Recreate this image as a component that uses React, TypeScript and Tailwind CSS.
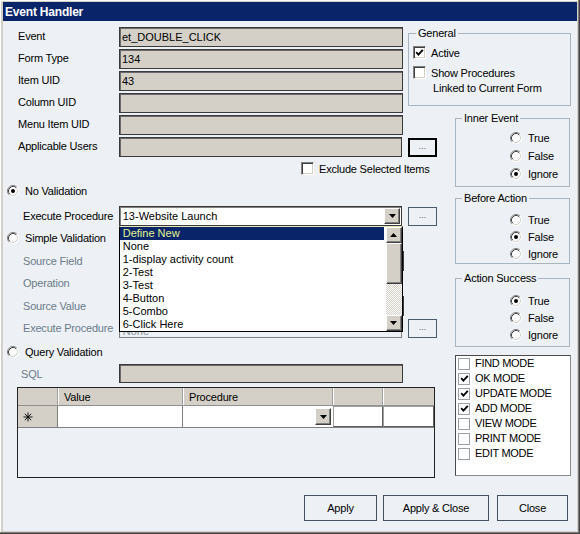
import React from 'react';

const raised =
  'bg-[#d4d0c8] border border-t-white border-l-white border-r-[#404040] border-b-[#404040] shadow-[inset_-1px_-1px_#808080]';
const field = 'h-5 border border-[#3a3a3a] shadow-[inset_1px_1px_#6a6a6a] bg-[#d4d0c8] flex items-center pl-[2px]';
const label = 'text-[11px] leading-[14px] tracking-[-0.2px]';
const dim = 'text-[#6b7a8c]';

function Arrow({ up }: { up?: boolean }) {
  return (
    <svg width="7" height="4" viewBox="0 0 7 4">
      <path d={up ? 'M3.5 0L7 4H0z' : 'M0 0h7L3.5 4z'} fill="#000" />
    </svg>
  );
}

function DropBtn({ up }: { up?: boolean }) {
  return (
    <div className={`${raised} w-4 h-4 shrink-0 flex items-center justify-center`}>
      <Arrow up={up} />
    </div>
  );
}

function Radio({ on }: { on?: boolean }) {
  return (
    <svg width="12" height="12" viewBox="0 0 12 12" className="shrink-0">
      <circle cx="6" cy="6" r="5" fill="#fff" />
      <path d="M2.1 9.9A5.5 5.5 0 0 1 9.9 2.1" fill="none" stroke="#808080" />
      <path d="M2.82 9.18A4.5 4.5 0 0 1 9.18 2.82" fill="none" stroke="#404040" />
      <path d="M9.9 2.1A5.5 5.5 0 0 1 2.1 9.9" fill="none" stroke="#ffffff" />
      <path d="M9.18 2.82A4.5 4.5 0 0 1 2.82 9.18" fill="none" stroke="#d4d0c8" />
      {on && <circle cx="6" cy="6" r="2" fill="#000" />}
    </svg>
  );
}

function Tick() {
  return (
    <svg width="9" height="9" viewBox="0 0 9 9">
      <path d="M1.2 4.2L3.4 6.6L7.8 1.8" stroke="#000" strokeWidth="1.8" fill="none" />
    </svg>
  );
}

function Check({ on }: { on?: boolean }) {
  return (
    <span className="w-[13px] h-[13px] shrink-0 bg-white border border-t-[#808080] border-l-[#808080] border-r-white border-b-white shadow-[inset_1px_1px_#404040,inset_-1px_-1px_#d4d0c8] flex items-center justify-center">
      {on && <Tick />}
    </span>
  );
}

function Dots({ strong }: { strong?: boolean }) {
  return (
    <div
      className={`ml-[6px] w-[29px] h-[19px] shrink-0 flex items-center justify-center text-[9px] text-[#4a5a70] ${
        strong ? 'border-2 border-black' : 'border border-[#4b5b6b]'
      }`}
    >
      ...
    </div>
  );
}

function Row({ name, value }: { name: string; value?: string }) {
  return (
    <div className="flex items-center h-5 pl-[15px]">
      <span className={`${label} w-[101px] -mt-[2px]`}>{name}</span>
      <div className={`${field} w-[284px] text-[11px]`}>{value}</div>
    </div>
  );
}

function RadioLine({ text, on, className = '' }: { text: string; on?: boolean; className?: string }) {
  return (
    <div className={`flex items-center gap-[6px] ${className}`}>
      <Radio on={on} />
      <span className={label}>{text}</span>
    </div>
  );
}

function Group({
  title,
  sel,
  className,
  pad,
  row,
}: {
  title: string;
  sel: number;
  className: string;
  pad: string;
  row: string;
}) {
  return (
    <fieldset className={`ml-[18px] w-[115px] border border-[#a8b4c0] ${className}`}>
      <legend className={`${label} ml-[6px] px-[2px]`}>{title}</legend>
      <div className={pad}>
        {['True', 'False', 'Ignore'].map((t, i) => (
          <RadioLine key={t} text={t} on={i === sel} className={`${row} pl-[54px]`} />
        ))}
      </div>
    </fieldset>
  );
}

const procedures = ['None', '1-display activity count', '2-Test', '3-Test', '4-Button', '5-Combo', '6-Click Here'];
const modes: [string, boolean][] = [
  ['FIND MODE', false],
  ['OK MODE', true],
  ['UPDATE MODE', true],
  ['ADD MODE', true],
  ['VIEW MODE', false],
  ['PRINT MODE', false],
  ['EDIT MODE', false],
];

export default function App() {
  return (
    <div className="w-[580px] h-[534px] bg-[#d4d0c8] pt-[2px] px-[3px] pb-[3px] flex flex-col font-['Liberation_Sans',Arial,sans-serif] text-black shadow-[inset_-1px_-1px_#404040,inset_-2px_-2px_#808080,inset_1px_1px_#ffffff]">
      <div className="h-[19px] bg-[#0a246a] text-white font-bold text-[12px] tracking-[-0.2px] flex items-center pl-[2px]">
        Event Handler
      </div>

      <div className="flex-1 bg-[#edf1f5] flex flex-col">
        <div className="flex items-start">
          {/* left side: fields, validation options, grid */}
          <div className="w-[434px] shrink-0 flex flex-col">
            <div className="mt-[6px] flex flex-col gap-[2px]">
              <Row name="Event" value="et_DOUBLE_CLICK" />
              <Row name="Form Type" value="134" />
              <Row name="Item UID" value="43" />
              <Row name="Column UID" />
              <Row name="Menu Item UID" />
              <div className="flex items-center h-5 pl-[15px]">
                <span className={`${label} w-[101px] -mt-[2px]`}>Applicable Users</span>
                <div className={`${field} w-[284px]`} />
                <Dots strong />
              </div>
            </div>

            <div className="mt-[5px] h-[13px] flex items-center gap-[5px] pl-[298px]">
              <Check />
              <span className={label}>Exclude Selected Items</span>
            </div>

            <RadioLine text="No Validation" on className="mt-[9px] h-[14px] pl-[4px]" />

            <div className="mt-[8px] flex items-center h-5 pl-[20px]">
              <span className={`${label} w-[96px]`}>Execute Procedure</span>
              <div className="relative w-[284px] h-5">
                <div className="h-5 bg-white border border-[#3a3a3a] shadow-[inset_1px_1px_#808080] flex items-center justify-between pl-[3px] pr-[1px] text-[11px]">
                  <span>13-Website Launch</span>
                  <DropBtn />
                </div>
                {/* open drop-down list */}
                <div className="absolute z-10 left-0 top-full w-[284px] h-[106px] bg-white border border-black border-t-[#e6e8b8] flex text-[11px] leading-[13px]">
                  <div className="flex-1 flex flex-col pr-[2px]">
                    <div className="h-[13px] bg-[#0a246a] text-[#e0f590] pl-[3px]">Define New</div>
                    {procedures.map((p) => (
                      <div key={p} className="h-[13px] pl-[3px]">
                        {p}
                      </div>
                    ))}
                  </div>
                  <div className="w-4 flex flex-col">
                    <DropBtn up />
                    <div className={`${raised} h-[41px]`} />
                    <div className="flex-1 bg-[image:repeating-conic-gradient(#d4d0c8_0_25%,#ffffff_0_50%)] bg-[length:2px_2px]" />
                    <DropBtn />
                  </div>
                </div>
              </div>
              <Dots />
            </div>

            <RadioLine text="Simple Validation" className="mt-[5px] h-[14px] pl-[4px]" />

            <div className="mt-[6px] flex items-center h-5 pl-[20px]">
              <span className={`${label} ${dim} w-[96px]`}>Source Field</span>
              <div className={`${field} w-[285px]`} />
            </div>
            <div className="mt-[2px] flex items-center h-5 pl-[20px]">
              <span className={`${label} ${dim} w-[96px]`}>Operation</span>
              <div className={`${field} w-[283px]`} />
            </div>
            <div className="mt-[3px] flex items-center h-5 pl-[20px]">
              <span className={`${label} ${dim} w-[96px]`}>Source Value</span>
              <div className={`${field} w-[285px]`} />
            </div>
            <div className="mt-[2px] flex items-center h-5 pl-[20px]">
              <span className={`${label} ${dim} w-[96px]`}>Execute Procedure</span>
              <div className="w-[284px] h-5 border border-[#808080] flex items-end pl-[3px] text-[11px] leading-[12px] text-[#8a94a0]">
                None
              </div>
              <Dots />
            </div>

            <RadioLine text="Query Validation" className="mt-[7px] h-[14px] pl-[4px]" />

            <div className="mt-[5px] flex items-center h-[19px] pl-[18px]">
              <span className={`${label} ${dim} w-[98px]`}>SQL</span>
              <div className={`${field} h-[19px] w-[284px]`} />
            </div>

            {/* value / procedure grid */}
            <div className="mt-[4px] ml-[14px] w-[418px] h-[91px] border border-[#222] flex flex-col text-[11px] tracking-[-0.2px]">
              <div className="h-[18px] flex bg-[#d4d0c8] border-b border-[#909090]">
                <div className="w-[40px] border-r border-[#a0a0a0]" />
                <div className="w-[125px] border-r border-[#a0a0a0] shadow-[inset_1px_0_#ffffff] pl-[6px] pt-[2px] flex items-center">Value</div>
                <div className="w-[150px] border-r border-[#a0a0a0] shadow-[inset_1px_0_#ffffff] pl-[6px] pt-[2px] flex items-center">Procedure</div>
                <div className="w-[50px] border-r border-[#a0a0a0] shadow-[inset_1px_0_#ffffff]" />
                <div className="flex-1 shadow-[inset_1px_0_#ffffff]" />
              </div>
              <div className="h-[22px] flex border-b border-[#808080]">
                <div className="w-[40px] bg-[#d4d0c8] border-r border-[#808080] flex items-center pl-[5px]">
                  <svg width="10" height="10" viewBox="0 0 10 10">
                    <path d="M5 0.5V9.5M0.5 5H9.5M1.8 1.8L8.2 8.2M8.2 1.8L1.8 8.2" stroke="#000" strokeWidth="0.9" />
                  </svg>
                </div>
                <div className="w-[125px] bg-white border-r border-[#808080]" />
                <div className="w-[150px] bg-white flex items-center justify-end pr-[2px]">
                  <div className={`${raised} w-4 h-[17px] flex items-center justify-center`}>
                    <Arrow />
                  </div>
                </div>
                <div className="w-[50px] bg-white border border-[#a0a0a0] border-r-[#606060] border-b-[#606060]" />
                <div className="flex-1 bg-white border border-[#a0a0a0] border-r-[#606060] border-b-[#606060]" />
              </div>
            </div>
          </div>

          {/* right side: option groups and mode list */}
          <div className="flex flex-col">
            <fieldset className="mt-[5px] -ml-[29px] w-[163px] h-[80px] border border-[#a8b4c0]">
              <legend className={`${label} ml-[7px] px-[2px]`}>General</legend>
              <div className="pt-[6px] pl-[4px] flex flex-col">
                <div className="h-[13px] flex items-center gap-[5px]">
                  <Check on />
                  <span className={label}>Active</span>
                </div>
                <div className="mt-[7px] h-[13px] flex items-center gap-[5px]">
                  <Check />
                  <span className={label}>Show Procedures</span>
                </div>
                <div className={`${label} mt-[2px] pl-[20px]`}>Linked to Current Form</div>
              </div>
            </fieldset>

            <Group title="Inner Event" sel={2} className="mt-[5px] h-[76px]" pad="pt-[4px]" row="h-[18px]" />
            <Group title="Before Action" sel={1} className="mt-[4px] h-[73px]" pad="pt-[6px]" row="h-[17px]" />
            <Group title="Action Success" sel={0} className="mt-[7px] h-[76px]" pad="pt-[7px]" row="h-[17px]" />

            <div className="mt-[8px] ml-[18px] w-[116px] h-[121px] bg-white border border-[#4a4a4a] border-r-[#8a8a8a] border-b-[#8a8a8a] pl-[2px] flex flex-col">
              {modes.map(([m, on]) => (
                <div key={m} className="h-[15px] flex items-center gap-[5px]">
                  <span className="w-[12px] h-[12px] border border-[#9aa2aa] bg-white flex items-center justify-center">
                    {on && <Tick />}
                  </span>
                  <span className="text-[11px] tracking-[-0.3px]">{m}</span>
                </div>
              ))}
            </div>
          </div>
        </div>

        <div className="mt-[17px] flex justify-end pr-[9px] text-[11px] tracking-[-0.2px]">
          <button className="w-[73px] h-[26px] border border-[#46505c]">Apply</button>
          <button className="ml-[6px] w-[106px] h-[26px] border border-[#46505c]">Apply &amp; Close</button>
          <button className="ml-[8px] w-[71px] h-[26px] border border-[#46505c]">Close</button>
        </div>
      </div>
    </div>
  );
}
